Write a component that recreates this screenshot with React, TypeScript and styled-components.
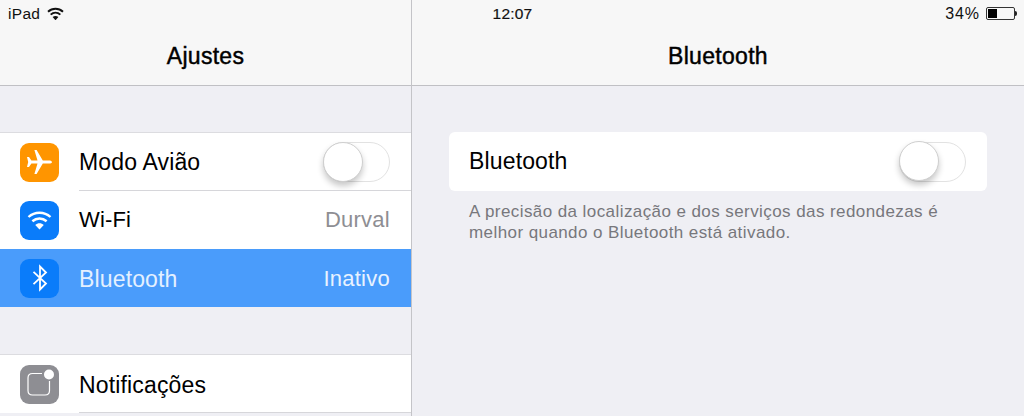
import React from 'react';
import styled, { createGlobalStyle } from 'styled-components';

const GlobalStyle = createGlobalStyle`
    html, body {
        margin: 0;
        padding: 0;
        height: 100%;
        overflow: hidden;
        background: #efeff4;
        font-family: "Liberation Sans", Arial, sans-serif;
        color: #000;
    }
`;

const Screen = styled.main`
    position: relative;
    width: 1024px;
    height: 416px;
    display: grid;
    grid-template-columns: 412px 1fr;
    overflow: hidden;
`;

const StatusBar = styled.div`
    position: absolute;
    top: 0;
    left: 0;
    right: 0;
    height: 27px;
    padding: 0 7px 0 8px;
    display: grid;
    grid-template-columns: 1fr auto 1fr;
    align-items: center;
    font-size: 15.5px;
    color: #111;
`;

const StatusLeft = styled.div`
    display: flex;
    align-items: center;
    gap: 7px;
    letter-spacing: 0.3px;
`;

const StatusTime = styled.div`
    font-size: 15.5px;
    letter-spacing: 0.2px;
    -webkit-text-stroke: 0.2px #111;
`;

const StatusRight = styled.div`
    display: flex;
    align-items: center;
    justify-content: flex-end;
    gap: 6px;
    font-size: 16px;
    letter-spacing: 0.9px;
`;

const Battery = styled.div`
    position: relative;
    width: 29px;
    height: 13px;
    box-sizing: border-box;
    margin-right: 2px;
    border: 1px solid #333;
    border-radius: 2px;
    padding: 1px;

    &::before {
        content: '';
        display: block;
        width: 9px;
        height: 100%;
        background: #000;
    }

    &::after {
        content: '';
        position: absolute;
        right: -3px;
        top: 3px;
        width: 2px;
        height: 5px;
        border-radius: 0 2px 2px 0;
        background: #222;
    }
`;

const Pane = styled.section<{ $divider?: boolean }>`
    min-width: 0;
    display: flex;
    flex-direction: column;
    border-right: ${p => (p.$divider ? '1px solid #c4c4c8' : 'none')};
`;

const NavBar = styled.header`
    height: 85px;
    flex: none;
    display: flex;
    align-items: flex-end;
    justify-content: center;
    background: #f7f7f7;
    border-bottom: 1px solid #c0c0c4;
`;

const NavTitle = styled.h1`
    margin: 0 0 16px;
    font-size: 23px;
    line-height: 26px;
    letter-spacing: 0.3px;
    font-weight: 400;
    -webkit-text-stroke: 0.45px #000;
`;

const Group = styled.ul`
    list-style: none;
    margin: 46px 0 0;
    padding: 0;
    background: #fff;
    border-top: 1px solid #dcdce0;
`;

const SecondGroup = styled(Group)`
    margin-top: 47px;
`;

const Row = styled.li<{ $selected?: boolean; $last?: boolean }>`
    position: relative;
    height: 58px;
    box-sizing: border-box;
    padding: 0 21px 0 20px;
    display: flex;
    align-items: center;
    gap: 20px;
    font-size: 23px;
    color: ${p => (p.$selected ? '#e4f0ff' : '#000')};
    background: ${p => (p.$selected ? '#4a9cfb' : '#fff')};

    &::after {
        content: '';
        display: ${p => (p.$selected || p.$last ? 'none' : 'block')};
        position: absolute;
        left: 79px;
        right: 0;
        bottom: 0;
        height: 1px;
        background: #d6d6da;
    }
`;

const IconTile = styled.span<{ $color: string }>`
    flex: none;
    width: 39px;
    height: 39px;
    border-radius: 9px;
    background: ${p => p.$color};
    display: flex;
    align-items: center;
    justify-content: center;
`;

const RowLabel = styled.span<{ $tight?: boolean; $low?: boolean }>`
    flex: 1;
    font-size: ${p => (p.$tight ? '22px' : '23px')};
    letter-spacing: 0.15px;
    padding-top: ${p => (p.$low ? '2px' : '0')};
`;

const RowValue = styled.span<{ $selected?: boolean }>`
    font-size: 22px;
    padding-top: ${p => (p.$selected ? '2px' : '0')};
    letter-spacing: 0.25px;
    color: ${p => (p.$selected ? '#e8f2ff' : '#8e8e93')};
`;

const Toggle = styled.span`
    flex: none;
    position: relative;
    display: block;
    width: 67px;
    height: 40px;
    box-sizing: border-box;
    border: 1.5px solid #e2e2e2;
    border-radius: 20px;
    background: #fff;

    &::before {
        content: '';
        position: absolute;
        left: -1.5px;
        top: -1.5px;
        width: 40px;
        height: 40px;
        box-sizing: border-box;
        border-radius: 50%;
        background: #fff;
        border: 1px solid #cfcfcf;
        box-shadow: 0 4px 6px rgba(0, 0, 0, 0.22);
    }
`;

const Detail = styled.div`
    padding: 46px 37px 0 37px;
`;

const Card = styled.div`
    height: 59px;
    box-sizing: border-box;
    padding: 0 21px 0 20px;
    display: flex;
    align-items: center;
    justify-content: space-between;
    background: #fff;
    border-radius: 6px;
    font-size: 23px;
    letter-spacing: 0.15px;
`;

const Note = styled.p`
    margin: 10px 20px 0;
    font-size: 17px;
    line-height: 21px;
    letter-spacing: 0.42px;
    color: #77777c;
`;

const WifiGlyph = ({ size, color, weight }: { size: number; color: string; weight: number }) => (
    <svg width={size} height={size * 0.8} viewBox="0 0 20 16" fill="none">
        <path d="M1.2 5.6C6.2 1 13.8 1 18.8 5.6" stroke={color} strokeWidth={weight} />
        <path d="M4.3 9C7.6 6 12.4 6 15.7 9" stroke={color} strokeWidth={weight} />
        <path d="M10 15.6L6.6 11.9C8.6 10.2 11.4 10.2 13.4 11.9Z" fill={color} />
    </svg>
);

const PlaneGlyph = () => (
    <svg width="27" height="26" viewBox="0 0 27 26">
        <path
            fill="#fff"
            d="M26 13c0-1-1.500-1.600-3-1.600h-6.200L10.600 1H8.400l3.100 10.400H5.400L3 8H1l1.200 5L1 18h2l2.400-3.400h6.100L8.400 25h2.200l6.200-10.400H23c1.500 0 3-.6 3-1.600z"
        />
    </svg>
);

const BluetoothGlyph = () => (
    <svg width="18" height="28" viewBox="0 0 18 28" fill="none">
        <path d="M2.500 7.800L15 19.500L9 25.500V2.500L15 8.500L2.500 20.200" stroke="#fff" strokeWidth="1.800" />
    </svg>
);

const NotificationGlyph = () => (
    <svg width="30" height="30" viewBox="0 0 30 30" fill="none">
        <path
            d="M17 4.500H7.500C4.500 4.500 3 6 3 9V21.500C3 24.500 4.500 26 7.500 26H20C23 26 24.500 24.500 24.500 21.500V12"
            stroke="#fff"
            strokeWidth="1.200"
        />
        <circle cx="24" cy="5.500" r="5" fill="#fff" />
    </svg>
);

export default function App() {
    return (
        <Screen>
            <GlobalStyle />
            <Pane $divider>
                <NavBar>
                    <NavTitle>Ajustes</NavTitle>
                </NavBar>
                <Group>
                    <Row>
                        <IconTile $color="#ff9500"><PlaneGlyph /></IconTile>
                        <RowLabel>Modo Avião</RowLabel>
                        <Toggle />
                    </Row>
                    <Row $last>
                        <IconTile $color="#0a7cfa"><WifiGlyph size={25} color="#fff" weight={1.9} /></IconTile>
                        <RowLabel $tight>Wi-Fi</RowLabel>
                        <RowValue>Durval</RowValue>
                    </Row>
                    <Row $selected>
                        <IconTile $color="#0a7cfa"><BluetoothGlyph /></IconTile>
                        <RowLabel $low>Bluetooth</RowLabel>
                        <RowValue $selected>Inativo</RowValue>
                    </Row>
                </Group>
                <SecondGroup>
                    <Row>
                        <IconTile $color="#8e8e93"><NotificationGlyph /></IconTile>
                        <RowLabel $low>Notificações</RowLabel>
                    </Row>
                </SecondGroup>
            </Pane>
            <Pane>
                <NavBar>
                    <NavTitle>Bluetooth</NavTitle>
                </NavBar>
                <Detail>
                    <Card>
                        Bluetooth
                        <Toggle />
                    </Card>
                    <Note>
                        A precisão da localização e dos serviços das redondezas é melhor quando o Bluetooth está ativado.
                    </Note>
                </Detail>
            </Pane>
            <StatusBar>
                <StatusLeft>
                    iPad
                    <WifiGlyph size={17} color="#111" weight={2.3} />
                </StatusLeft>
                <StatusTime>12:07</StatusTime>
                <StatusRight>
                    34%
                    <Battery />
                </StatusRight>
            </StatusBar>
        </Screen>
    );
}
